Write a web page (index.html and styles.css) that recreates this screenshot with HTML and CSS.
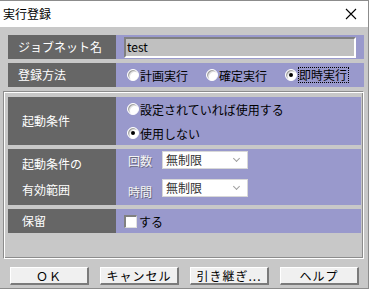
FILE: index.html
```html
<!DOCTYPE html>
<html>
  <head>
    <meta charset="utf-8" />
    <title>実行登録</title>
    <link rel="stylesheet" href="styles.css">
  </head>
  <body>
    <div class="dialog">
      <div class="title-bar">
        <span class="title">実行登録</span>
        <svg class="close" width="12" height="12" viewBox="0 0 12 12">
          <path d="M1 1 L11 11 M11 1 L1 11" stroke="#000" stroke-width="1.1" />
        </svg>
      </div>

      <div class="content">
        <div class="row top-row">
          <div class="label">ジョブネット名</div>
          <div class="value">
            <div class="text-input">test</div>
          </div>
        </div>

        <div class="row top-row">
          <div class="label">登録方法</div>
          <div class="value radios">
            <label class="radio-item"><span class="radio"></span>計画実行</label>
            <label class="radio-item"><span class="radio"></span>確定実行</label>
            <label class="radio-item"><span class="radio checked"></span><span class="focus">即時実行</span></label>
          </div>
        </div>

        <div class="group">
          <div class="row cond-row">
            <div class="label">起動条件</div>
            <div class="value stack">
              <label class="radio-item"><span class="radio"></span>設定されていれば使用する</label>
              <label class="radio-item"><span class="radio checked"></span>使用しない</label>
            </div>
          </div>

          <div class="row range-row">
            <div class="label">起動条件の<br>有効範囲</div>
            <div class="value stack">
              <div class="range-item">
                <span class="disabled">回数</span>
                <div class="select">無制限<span class="chevron"></span></div>
              </div>
              <div class="range-item low">
                <span class="disabled">時間</span>
                <div class="select">無制限<span class="chevron"></span></div>
              </div>
            </div>
          </div>

          <div class="row hold-row">
            <div class="label">保留</div>
            <div class="value">
              <label class="check-item"><span class="checkbox"></span>する</label>
            </div>
          </div>
        </div>

        <div class="buttons">
          <button class="btn">ＯＫ</button>
          <button class="btn">キャンセル</button>
          <button class="btn">引き継ぎ...</button>
          <button class="btn">ヘルプ</button>
        </div>
      </div>
    </div>
  </body>
</html>
```

FILE: styles.css
```css
* {
  margin: 0;
  padding: 0;
  box-sizing: border-box;
}
body {
  background: #ffffff;
  font-family: "Noto Sans CJK JP", "Liberation Sans", sans-serif;
  font-size: 12px;
  color: #000;
}
.dialog {
  width: 369px;
  height: 289px;
  background: #c8c8c8;
  border-right: 1px solid #8c8c8c;
  border-bottom: 1px solid #8c8c8c;
  border-top: 1px solid #8c8c8c;
}
.title-bar {
  height: 26px;
  background: #fff;
  display: flex;
  align-items: center;
  justify-content: space-between;
  padding: 0 11px 0 3px;
}
.title {
  font-size: 12px;
  line-height: 14px;
}
.content {
  padding-top: 8px;
}
.row {
  display: flex;
  height: 24px;
}
.top-row {
  margin-left: 8px;
  width: 356px;
  margin-bottom: 4px;
}
.label {
  width: 108px;
  flex-shrink: 0;
  background: #666666;
  color: #fff;
  display: flex;
  align-items: center;
  padding-left: 10px;
  line-height: 24px;
  white-space: nowrap;
}
.value {
  flex: 1;
  min-width: 0;
  background: #9999cc;
  display: flex;
  align-items: center;
}
.text-input {
  margin-left: 8px;
  width: 232px;
  height: 21px;
  background: #c0c0c0;
  border-top: 2px solid #808080;
  border-left: 2px solid #808080;
  border-right: 2px solid #fff;
  border-bottom: 2px solid #fff;
  line-height: 16px;
  padding-left: 1px;
}
.radios {
  padding-left: 11px;
}
.radio-item {
  display: flex;
  align-items: center;
  flex-shrink: 0;
  white-space: nowrap;
  margin-right: 18px;
}
.radio {
  width: 12px;
  height: 12px;
  flex-shrink: 0;
  border-radius: 50%;
  background: #fff;
  border: 1px solid #fff;
  box-shadow: inset 1px 1px 0 #a0a0a0, inset 2px 2px 0 #e0e0e0;
  margin-right: 1px;
  display: flex;
  align-items: center;
  justify-content: center;
}
.radio.checked::after {
  content: "";
  width: 4px;
  height: 4px;
  border-radius: 50%;
  background: #000;
}
.focus {
  border: 1px dotted #000;
  line-height: 14px;
  padding: 0 1px 0 0;
}
.group {
  margin: 2px 4px 0 3px;
  height: 168px;
  border-top: 1px solid #8c8c8c;
  border-left: 1px solid #8c8c8c;
  border-right: 1px solid #fff;
  border-bottom: 1px solid #fff;
  box-shadow: inset 1px 1px 0 #fff, inset -1px -1px 0 #8c8c8c;
  padding: 5px 2px 0 4px;
}
.group .row {
  margin-bottom: 4px;
}
.group .label {
  padding-left: 14px;
}
.cond-row {
  height: 48px;
}
.range-row {
  height: 56px;
}
.range-row .label {
  line-height: 26px;
}
.hold-row {
  margin-top: 1px;
}
.stack {
  flex-direction: column;
  align-items: flex-start;
  justify-content: center;
  padding-left: 11px;
}
.cond-row .stack {
  justify-content: flex-start;
  padding-top: 0;
}
.cond-row .radio-item {
  height: 24px;
}
.range-row .stack {
  justify-content: flex-start;
  padding-top: 2px;
  padding-left: 12px;
}
.range-item {
  display: flex;
  align-items: center;
  height: 18px;
  margin-bottom: 10px;
}
.range-item.low .disabled {
  margin-top: 6px;
}
.disabled {
  color: #f4f4f4;
  text-shadow: 1px 1px 0 #6a6a80;
  width: 34px;
}
.select {
  width: 86px;
  height: 18px;
  background: #fff;
  border: 1px solid #d8d8d8;
  color: #333;
  line-height: 16px;
  padding-left: 3px;
  position: relative;
}
.chevron {
  position: absolute;
  right: 8px;
  top: 4px;
  width: 5px;
  height: 5px;
  border-right: 1px solid #a0a0a0;
  border-bottom: 1px solid #a0a0a0;
  transform: rotate(45deg);
}
.check-item {
  display: flex;
  align-items: center;
  padding-left: 8px;
}
.checkbox {
  width: 13px;
  height: 13px;
  background: #fff;
  border-top: 2px solid #808080;
  border-left: 2px solid #808080;
  border-right: 1px solid #e0e0e0;
  border-bottom: 1px solid #e0e0e0;
  margin-right: 2px;
}
.buttons {
  display: flex;
  gap: 11px;
  padding: 8px 0 0 10px;
}
.btn {
  width: 79px;
  height: 18px;
  background: #f0f0f0;
  border-top: 1px solid #fff;
  border-left: 1px solid #fff;
  border-right: 2px solid #7a7a7a;
  border-bottom: 2px solid #7a7a7a;
  font-family: "Noto Sans CJK JP", "Liberation Sans", sans-serif;
  font-size: 12px;
  line-height: 14px;
  color: #000;
  letter-spacing: 1px;
}
```
